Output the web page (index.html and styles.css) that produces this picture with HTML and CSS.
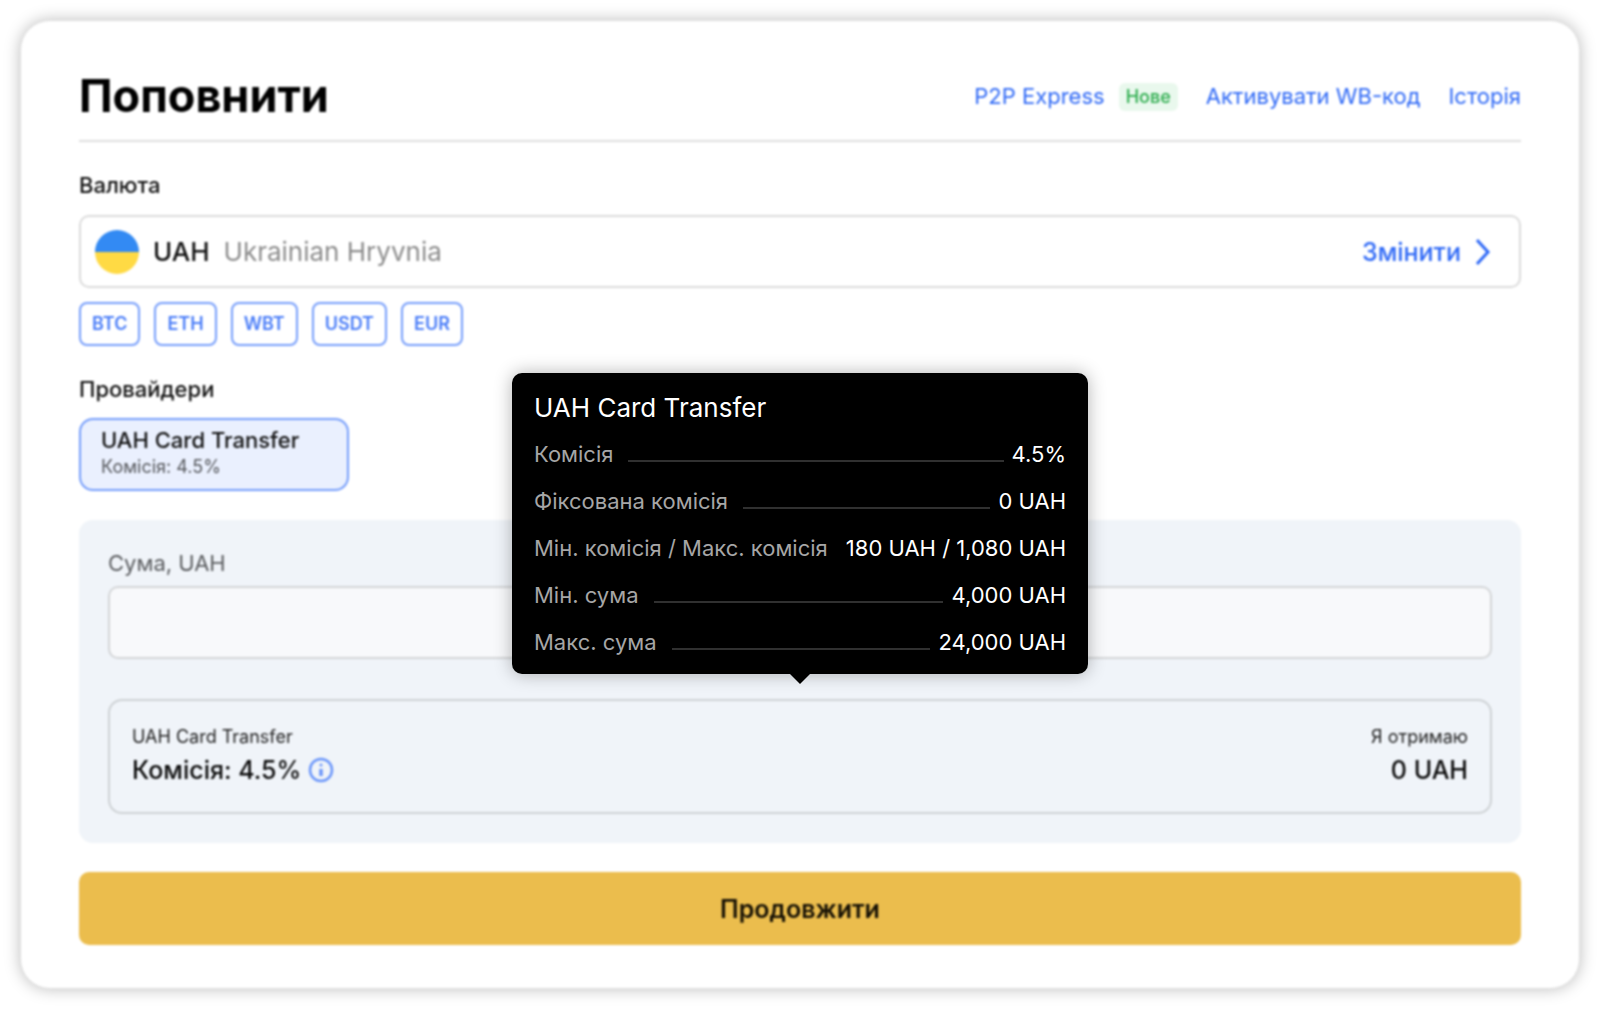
FILE: index.html
```html
<!DOCTYPE html>
<html lang="uk">
<head>
<meta charset="utf-8">
<meta name="viewport" content="width=device-width, initial-scale=1">
<title>Поповнити</title>
<link rel="stylesheet" href="styles.css">
</head>
<body>
<div class="page">
  <main class="card">
    <header class="head">
      <h1 class="title">Поповнити</h1>
      <nav class="links">
        <span class="express"><a class="link" href="#p2p">P2P Express</a><span class="tag">Нове</span></span>
        <a class="link" href="#code">Активувати WB-код</a>
        <a class="link" href="#history">Історія</a>
      </nav>
    </header>

    <h2 class="label">Валюта</h2>
    <button class="currency" type="button">
      <svg class="flag" viewBox="0 0 44 44" aria-hidden="true"><path d="M0 22a22 22 0 0 1 44 0z" fill="#338af3"/><path d="M0 22a22 22 0 0 0 44 0z" fill="#ffda44"/></svg>
      <span class="code">UAH</span>
      <span class="name">Ukrainian Hryvnia</span>
      <span class="change">Змінити
        <svg class="chevron" viewBox="0 0 16 28" aria-hidden="true"><path d="M2 2l11 12L2 26" fill="none" stroke="currentColor" stroke-width="3"/></svg>
      </span>
    </button>
    <div class="chips">
      <button class="chip" type="button">BTC</button>
      <button class="chip" type="button">ETH</button>
      <button class="chip" type="button">WBT</button>
      <button class="chip" type="button">USDT</button>
      <button class="chip" type="button">EUR</button>
    </div>

    <h2 class="label">Провайдери</h2>
    <button class="provider" type="button">
      <span class="provider-name">UAH Card Transfer</span>
      <span class="provider-fee">Комісія: 4.5%</span>
    </button>

    <section class="panel">
      <label class="amount-label" for="amount">Сума, UAH</label>
      <input class="amount" id="amount" type="text" inputmode="decimal">
      <div class="summary">
        <div class="cell">
          <span class="small">UAH Card Transfer</span>
          <span class="big">Комісія: 4.5%
            <button class="info" type="button" aria-label="Комісія">
              <svg viewBox="0 0 26 26" aria-hidden="true"><circle cx="13" cy="13" r="11" fill="none" stroke="currentColor" stroke-width="2.5"/><circle cx="13" cy="8" r="1.5" fill="currentColor"/><path d="M13 12v7" stroke="currentColor" stroke-width="3.5"/></svg>
            </button>
          </span>
        </div>
        <div class="cell cell-right">
          <span class="small">Я отримаю</span>
          <span class="big">0 UAH</span>
        </div>
      </div>
    </section>

    <button class="submit" type="button">Продовжити</button>
  </main>

  <div class="tooltip" role="tooltip">
    <p class="tip-title">UAH Card Transfer</p>
    <dl class="tip-list">
      <div class="tip-row"><dt>Комісія</dt><dd>4.5%</dd></div>
      <div class="tip-row"><dt>Фіксована комісія</dt><dd>0 UAH</dd></div>
      <div class="tip-row"><dt>Мін. комісія / Макс. комісія</dt><dd>180 UAH / 1,080 UAH</dd></div>
      <div class="tip-row"><dt>Мін. сума</dt><dd>4,000 UAH</dd></div>
      <div class="tip-row"><dt>Макс. сума</dt><dd>24,000 UAH</dd></div>
    </dl>
  </div>
</div>
</body>
</html>
```

FILE: styles.css
```css
* {
  box-sizing: border-box;
}

body {
  margin: 0;
  background: #fff;
  color: #000;
  font-family: Inter, "Liberation Sans", sans-serif;
  font-optical-sizing: none;
}

button,
input {
  font: inherit;
  color: inherit;
  margin: 0;
}

button {
  cursor: pointer;
}

h1,
h2,
p,
dl,
dd {
  margin: 0;
}

.page {
  position: relative;
  padding: 20px;
}

.card {
  display: flex;
  flex-direction: column;
  padding: 48px 58px 43px;
  border: 1px solid #dedede;
  border-radius: 30px;
  background: #fff;
  box-shadow: 0 0 16px rgba(0, 0, 0, 0.26);
  filter: blur(1px);
}

.head {
  display: flex;
  align-items: center;
  justify-content: space-between;
  height: 73px;
  padding-bottom: 18px;
  border-bottom: 2px solid #dedede;
}

.title {
  font-size: 45px;
  line-height: 52px;
  font-weight: 700;
}

.links {
  display: flex;
  align-items: center;
  gap: 28px;
}

.express {
  display: flex;
  align-items: center;
  gap: 14px;
}

.link {
  color: #2f69f6;
  font-size: 22px;
  line-height: 28px;
  text-decoration: none;
}

.tag {
  margin-top: 2px;
  padding: 0 7px;
  border-radius: 6px;
  background: #e9f8ed;
  color: #2bac4c;
  font-size: 18px;
  line-height: 28px;
  font-weight: 500;
}

.label {
  margin-top: 30px;
  font-size: 22px;
  line-height: 26px;
  font-weight: 500;
  color: #111;
}

.currency {
  display: flex;
  align-items: center;
  height: 73px;
  margin-top: 17px;
  padding: 0 28px 0 14px;
  border: 2px solid #dbdbdb;
  border-radius: 10px;
  background: #fff;
  font-size: 26px;
  line-height: 32px;
}

.flag {
  width: 44px;
  height: 44px;
}

.code {
  margin-left: 14px;
  font-weight: 500;
  color: #111;
}

.name {
  margin-left: 14px;
  color: #8c8c8c;
}

.change {
  display: flex;
  align-items: center;
  gap: 14px;
  margin-left: auto;
  color: #2f69f6;
  font-size: 25px;
  font-weight: 500;
}

.chevron {
  width: 16px;
  height: 28px;
}

.chips {
  display: flex;
  gap: 14px;
  margin-top: 14px;
}

.chip {
  height: 44px;
  padding: 0 11px;
  border: 2px solid #759dfb;
  border-radius: 8px;
  background: #fff;
  color: #4a7df8;
  font-size: 18px;
  line-height: 24px;
  font-weight: 600;
}

.provider {
  display: flex;
  flex-direction: column;
  justify-content: center;
  width: 270px;
  height: 73px;
  margin-top: 16px;
  padding: 0 20px 3px;
  border: 2px solid #759dfb;
  border-radius: 14px;
  background: #eaf0fe;
  text-align: left;
}

.provider-name {
  font-size: 22px;
  line-height: 28px;
  font-weight: 500;
  color: #111;
}

.provider-fee {
  font-size: 18px;
  line-height: 26px;
  color: #55575b;
}

.panel {
  display: flex;
  flex-direction: column;
  margin-top: 29px;
  padding: 29px;
  border-radius: 14px;
  background: #f0f4f9;
}

.amount-label {
  font-size: 22px;
  line-height: 28px;
  color: #5a5c5f;
}

.amount {
  width: 100%;
  height: 73px;
  margin-top: 9px;
  padding: 0 20px;
  border: 2px solid #d3d5d7;
  border-radius: 10px;
  background: #f8f9fb;
  font-size: 26px;
}

.summary {
  display: flex;
  justify-content: space-between;
  margin-top: 40px;
  padding: 21px 22px 24px;
  border: 2px solid #ced2d5;
  border-radius: 14px;
}

.cell {
  display: flex;
  flex-direction: column;
}

.cell-right {
  align-items: flex-end;
}

.small {
  font-size: 18px;
  line-height: 30px;
  color: #222;
}

.big {
  display: flex;
  align-items: center;
  gap: 7px;
  font-size: 25px;
  line-height: 36px;
  font-weight: 500;
  color: #0a0a0a;
}

.info {
  display: flex;
  padding: 0;
  border: 0;
  background: none;
  color: #6b96fa;
}

.info svg {
  width: 26px;
  height: 26px;
}

.submit {
  height: 73px;
  margin-top: 29px;
  border: 0;
  border-radius: 10px;
  background: #ebbd4d;
  color: #151004;
  font-size: 25px;
  line-height: 32px;
  font-weight: 600;
}

.tooltip {
  position: absolute;
  top: 373px;
  left: 50%;
  width: 576px;
  padding: 15px 22px 8px;
  transform: translateX(-50%);
  border-radius: 10px;
  background: #000;
  color: #fff;
  box-shadow: 0 0 18px rgba(0, 0, 0, 0.3);
}

.tooltip::after {
  content: "";
  position: absolute;
  top: 100%;
  left: 50%;
  transform: translateX(-50%);
  border: 10px solid transparent;
  border-top-color: #000;
  border-bottom: 0;
}

.tip-title {
  font-size: 26px;
  line-height: 40px;
}

.tip-list {
  margin-top: 3px;
}

.tip-row {
  display: flex;
  align-items: center;
  justify-content: space-between;
  gap: 8px;
  font-size: 22px;
  line-height: 47px;
}

.tip-row dt {
  display: flex;
  flex: 1;
  align-items: center;
  gap: 15px;
  min-width: 0;
  color: #a6a6a6;
  white-space: nowrap;
}

.tip-row dt::after {
  content: "";
  flex: 1;
  height: 2px;
  margin-top: 12px;
  background: #303030;
}

.tip-row dd {
  white-space: nowrap;
}
```
